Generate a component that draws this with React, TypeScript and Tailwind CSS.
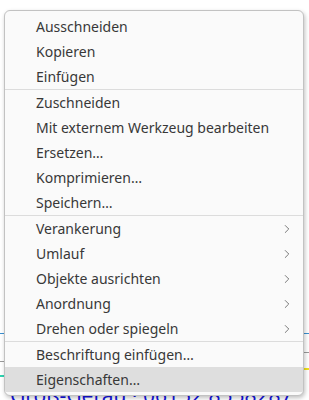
import React from "react"
import { ChevronRight } from "lucide-react"

type Item = { label: string; sub?: boolean; active?: boolean }

const SECTIONS: Item[][] = [
  [{ label: "Ausschneiden" }, { label: "Kopieren" }, { label: "Einfügen" }],
  [
    { label: "Zuschneiden" },
    { label: "Mit externem Werkzeug bearbeiten" },
    { label: "Ersetzen…" },
    { label: "Komprimieren…" },
    { label: "Speichern…" },
  ],
  [
    { label: "Verankerung", sub: true },
    { label: "Umlauf", sub: true },
    { label: "Objekte ausrichten", sub: true },
    { label: "Anordnung", sub: true },
    { label: "Drehen oder spiegeln", sub: true },
  ],
  [{ label: "Beschriftung einfügen…" }, { label: "Eigenschaften…", active: true }],
]

function MenuRow({ item }: { item: Item }) {
  return (
    <div
      className={`flex h-[25px] items-center pl-[31px] pr-[9px] ${
        item.active ? "bg-[#dedede]" : ""
      }`}
    >
      <span className="flex-1 whitespace-nowrap">{item.label}</span>
      {item.sub && <ChevronRight size={14} strokeWidth={1.2} className="text-[#444]" />}
    </div>
  )
}

// Dokument hinter dem Kontextmenü
function DocumentBackground() {
  return (
    <div className="flex h-full flex-col justify-end">
      <div className="flex items-start justify-between">
        <div className="flex w-[5px] flex-col">
          <div className="h-px bg-[#3a8fd0]" />
          <div className="mt-[27px] h-px bg-[#9a9a9a]" />
          <div className="mt-[13px] h-[2px] bg-[#2fd3b0]" />
        </div>
        <div className="flex w-[6px] flex-col">
          <div className="h-px bg-[#3a8fd0]" />
          <div className="mt-[18px] h-px bg-[#9a9a9a]" />
          <div className="mt-[15px] h-[2px] bg-[#f2e21a]" />
        </div>
      </div>
      <div className="mt-[8px] h-[15px] whitespace-nowrap pl-[10px] text-[21px] leading-none text-[#1414e0]">
        Groß-Gerau · 06152 8558287
      </div>
    </div>
  )
}

export default function App() {
  return (
    <div
      className="relative h-[400px] w-[309px] overflow-hidden bg-white"
      style={{ fontFamily: '"Noto Sans", "Open Sans", sans-serif' }}
    >
      <DocumentBackground />

      <div className="absolute left-[4px] top-[10px] w-[300px] overflow-hidden rounded-[6px] border border-[#c2c2c2] bg-[#fafafa] py-[3px] text-[14px] text-[#383838] shadow-[1px_2px_4px_rgba(0,0,0,0.25)]">
        {SECTIONS.map((section, i) => (
          <div key={i} className={i > 0 ? "border-t border-[#dcdcdc]" : ""}>
            {section.map((item) => (
              <MenuRow key={item.label} item={item} />
            ))}
          </div>
        ))}
      </div>
    </div>
  )
}
